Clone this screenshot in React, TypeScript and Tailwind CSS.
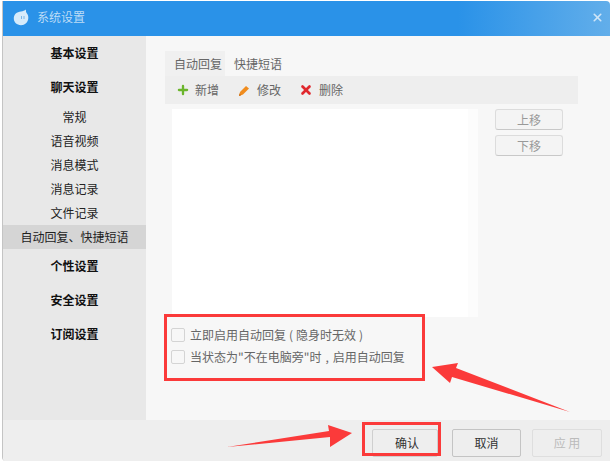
import { Plus, X } from "lucide-react";

const font = "font-['Noto_Sans_CJK_SC','Noto_Sans',sans-serif]";
const subItems = ["常规", "语音视频", "消息模式", "消息记录", "文件记录"];

const Heading = ({ label }: { label: string }) => (
  <div className="h-[34px] flex items-center justify-center text-xs font-bold text-[#111]">{label}</div>
);

const SideItem = ({ label, active }: { label: string; active?: boolean }) => (
  <div className={`h-6 flex items-center justify-center text-xs text-[#222] ${active ? "bg-[#d5d5d5]" : ""}`}>{label}</div>
);

const MoveButton = ({ label }: { label: string }) => (
  <button className="w-[68px] h-[21px] rounded-[3px] border border-[#dcdcdc] border-b-[#c8c8c8] bg-[#f4f4f4] text-xs text-[#999] flex items-center justify-center">
    {label}
  </button>
);

const CheckRow = ({ children }: { children: React.ReactNode }) => (
  <div className="flex items-center h-[22px]">
    <span className="w-[14px] h-[14px] rounded-[2px] border border-[#d4d4d4] bg-[#f7f7f7] mr-[5px]" />
    <span className="text-xs text-[#666]">{children}</span>
  </div>
);

const App = () => {
  return (
    <div className={`relative w-[610px] h-[461px] overflow-hidden bg-white pl-[2px] pt-[1px] ${font}`}>
      <div className="h-full flex flex-col border-l border-[#c4c4c4] rounded-bl-[4px] overflow-hidden">
        {/* title bar */}
        <div className="h-[35px] shrink-0 flex items-center pl-[10px] pr-[6px] rounded-tr-[4px] bg-[linear-gradient(90deg,#2a92e8_0%,#2a92e8_75%,#62aeea_100%)]">
          <svg width="16" height="17" viewBox="0 0 16 17" className="mr-[8px] mb-[2px]">
            <path d="M8 2.5 C10 2.2 11.5 1.5 13 0.5 C12.8 2 13 3 13.6 4 C15 5.5 15.5 7.5 15.3 9.3 C15 13.5 12 16.2 8 16.2 C3.8 16.2 0.8 13.2 0.8 9.3 C0.8 5.5 3.8 2.8 8 2.5 Z" fill="#d6ebfb" />
            <rect x="8" y="7" width="1" height="3" fill="#7ab8e8" />
            <rect x="10.5" y="7" width="1" height="3" fill="#7ab8e8" />
          </svg>
          <span className="text-xs text-[#bcdcf6] mb-[3px]">系统设置</span>
          <X className="ml-auto w-[13px] h-[13px] text-[#cfe5f7] mb-[3px]" strokeWidth={3} />
        </div>

        <div className="h-[384px] shrink-0 flex">
          {/* sidebar */}
          <div className="w-[143px] shrink-0 bg-[#e8e8e8]">
            <Heading label="基本设置" />
            <Heading label="聊天设置" />
            <div className="pt-[1px]">
              {subItems.map((item) => (
                <SideItem key={item} label={item} />
              ))}
              <SideItem label="自动回复、快捷短语" active />
            </div>
            <Heading label="个性设置" />
            <Heading label="安全设置" />
            <Heading label="订阅设置" />
          </div>

          {/* content */}
          <div className="flex-1 min-w-0 bg-[#f7f7f7] pl-[19px] pr-[32px] pt-[15px]">
            <div className="flex h-[25px] text-xs text-[#666]">
              <div className="w-[60px] pl-[9px] bg-[#f0f0f0] flex items-center">自动回复</div>
              <div className="pl-[9px] flex items-center">快捷短语</div>
            </div>
            <div className="h-[28px] bg-[#eeeeee] flex items-center pl-[11px] text-xs text-[#666]">
              <Plus className="w-[14px] h-[14px] text-[#6bb52c] mr-[5px]" strokeWidth={4} />
              <span className="mr-[20px]">新增</span>
              <svg width="10" height="11" viewBox="0 0 10 11" className="mr-[8px]">
                <polygon points="0,11 1,7 7,1 10,3.5 4,9.5" fill="#f08c1e" />
                <polygon points="0,11 0.6,8.5 2.2,10.2" fill="#c96a10" />
              </svg>
              <span className="mr-[18px]">修改</span>
              <X className="w-[14px] h-[14px] text-[#e0282e] mr-[6px]" strokeWidth={4.5} />
              <span>删除</span>
            </div>
            <div className="flex mt-[5px]">
              <div className="w-[296px] h-[208px] ml-[7px] bg-white" />
              <div className="w-[10px] h-[208px] bg-[#fcfcfc]" />
              <div className="ml-[17px] flex flex-col gap-[5px]">
                <MoveButton label="上移" />
                <MoveButton label="下移" />
              </div>
            </div>
            <div className="mt-[7px] ml-[6px]">
              <CheckRow>
                立即启用自动回复<span className="px-[3px]">(</span>隐身时无效<span className="px-[3px]">)</span>
              </CheckRow>
              <CheckRow>
                当状态为"不在电脑旁"时<span className="px-1">,</span>启用自动回复
              </CheckRow>
            </div>
          </div>
        </div>

        {/* footer */}
        <div className="flex-1 bg-[#eeeeee] flex items-start pt-[9px] pl-[369px] text-xs">
          <button className="w-[66px] h-[28px] pl-[4px] border border-[#cfcfcf] rounded-[2px] text-[#333]">确认</button>
          <button className="w-[69px] h-[28px] ml-[14px] border border-[#c4c4c4] rounded-[2px] text-[#333]">取消</button>
          <button className="w-[70px] h-[28px] ml-[11px] border border-[#dedede] rounded-[2px] text-[#bbb]">应 用</button>
        </div>
      </div>

      {/* red annotations drawn over the screenshot */}
      <div className="absolute left-[164px] top-[314px] w-[261px] h-[67px] border-[3px] border-[#fb3a3a]" />
      <div className="absolute left-[362px] top-[422px] w-[79px] h-[34px] border-[3px] border-[#fb3a3a]" />
      <svg className="absolute left-0 top-0 pointer-events-none" width="610" height="461">
        <polygon points="432,367 458,363 456,368 570,412 452,377 450,383" fill="#fb3a3a" />
        <polygon points="352,433 328,425 329,431 227,447 330,437 330,447" fill="#fb3a3a" />
      </svg>
    </div>
  );
};

export default App;
